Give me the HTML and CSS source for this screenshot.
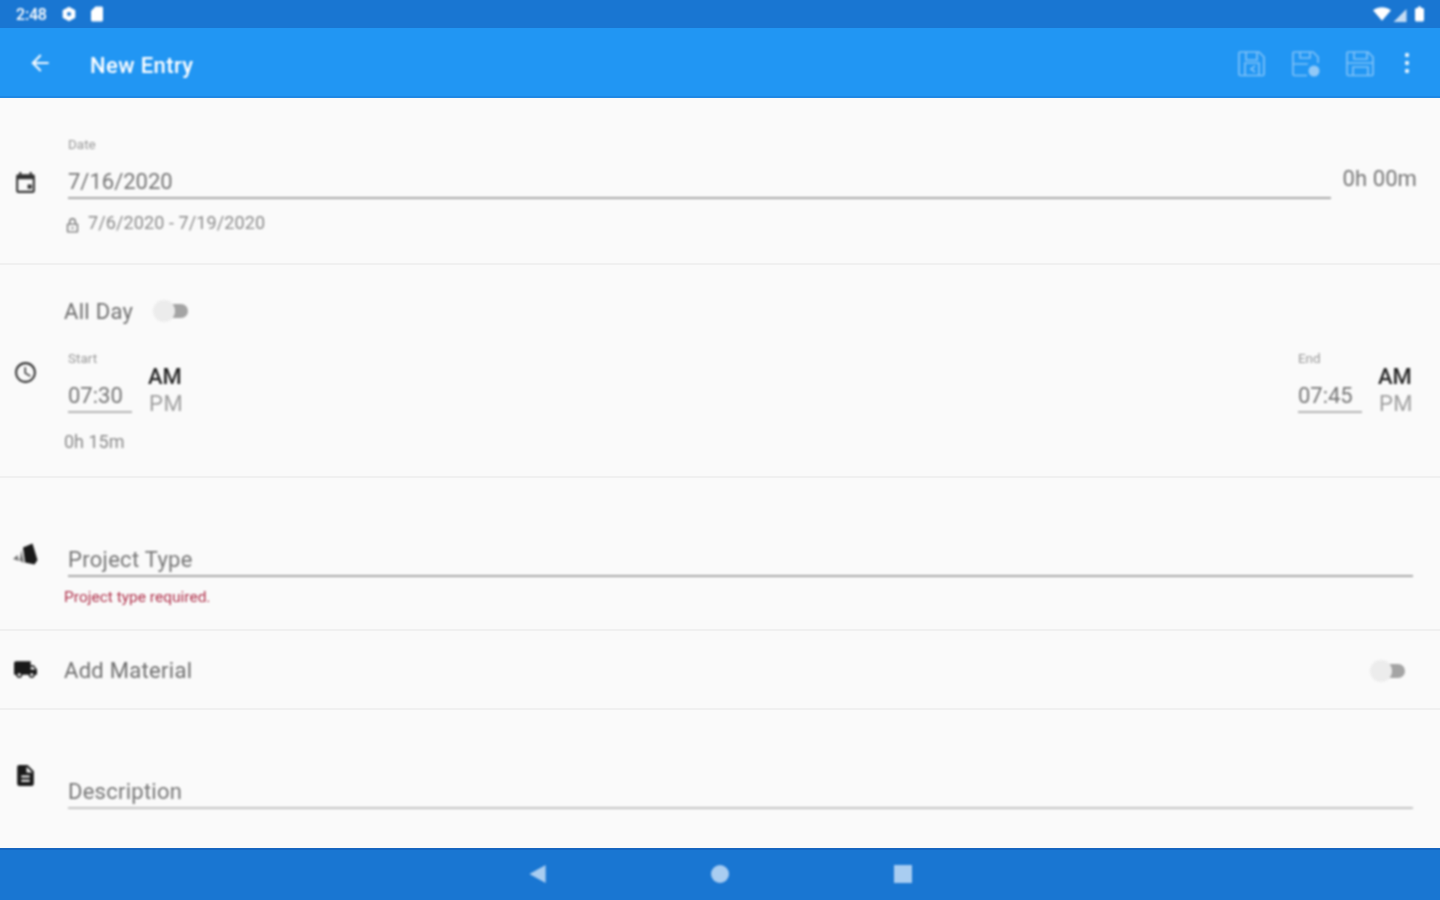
FILE: index.html
```html
<!DOCTYPE html>
<html>
  <head>
    <meta charset="utf-8" />
    <title>New Entry</title>
    <link rel="stylesheet" href="styles.css">
  </head>
  <body>
    <div class="screen">
      <div class="status-bar">
        <span class="clock-text">2:48</span>
        <svg class="status-gear" viewBox="0 0 24 24"><path d="M12 1l9.500 5.500v11L12 23l-9.500-5.500v-11zM12 9a3 3 0 1 0 0 6 3 3 0 0 0 0-6z" fill-rule="evenodd"/></svg>
        <svg class="status-sd" viewBox="0 0 24 24"><path d="M18 2h-8L4 8v12c0 1.100.9 2 2 2h12c1.100 0 2-.9 2-2V4c0-1.100-.9-2-2-2z"/></svg>
        <div class="spacer"></div>
        <svg class="status-wifi" viewBox="0 0 24 18"><path d="M12 18L0 4c7-5.300 17-5.300 24 0z"/></svg>
        <svg class="status-signal" viewBox="0 0 16 16"><path d="M16 0v16H0z" opacity=".75"/></svg>
        <svg class="status-batt" viewBox="0 0 12 20"><path d="M4 0h4v2h2c1 0 2 .8 2 2v14c0 1.200-1 2-2 2H2c-1 0-2-.8-2-2V4c0-1.200 1-2 2-2h2z"/></svg>
      </div>

      <div class="app-bar">
        <svg class="back" viewBox="0 0 24 24"><path d="M20 11H7.830l5.590-5.590L12 4l-8 8 8 8 1.410-1.410L7.830 13H20v-2z"/></svg>
        <div class="title">New Entry</div>
        <div class="spacer"></div>
        <svg class="action" viewBox="0 0 30 30"><path d="M3 4h19l5 5v17a1.500 1.500 0 0 1-1.500 1.500h-22A1.500 1.500 0 0 1 2 26V5a1 1 0 0 1 1-1zM9 4v8h11V4M8 27V15h14v12M18 18l-4 3 4 3"/></svg>
        <svg class="action" viewBox="0 0 30 30"><path d="M27 15V9l-5-5H3a1 1 0 0 0-1 1v21a1.500 1.500 0 0 0 1.500 1.500H16M9 4v6h10V4M2 16h15"/><circle cx="23" cy="23" r="5.500" fill="#a6d2f8" stroke="none"/></svg>
        <svg class="action" viewBox="0 0 30 30"><path d="M3 4h20l5 5v17a1.500 1.500 0 0 1-1.500 1.500h-23A1.500 1.500 0 0 1 2 26V5a1 1 0 0 1 1-1zM9 4v7h13V4M8 27v-8h15v8M2 15h26"/></svg>
        <svg class="more" viewBox="0 0 6 22"><circle cx="3" cy="3" r="2.200"/><circle cx="3" cy="11" r="2.200"/><circle cx="3" cy="19" r="2.200"/></svg>
      </div>

      <div class="content">
        <div class="section date-section">
          <svg class="icon cal" viewBox="0 0 24 24"><path d="M18 13h-4v4h4v-4zM16 1v2H8V1H6v2H5c-1.110 0-1.990.9-1.990 2L3 19c0 1.100.89 2 2 2h14c1.100 0 2-.9 2-2V5c0-1.100-.9-2-2-2h-1V1h-2zm3 18H5V8h14v11z"/></svg>
          <div class="date-body">
            <div class="small-label">Date</div>
            <div class="field date-field">7/16/2020</div>
            <div class="range">
              <svg class="lock" viewBox="0 0 24 24"><path d="M12 1.500a5 5 0 0 0-5 5V9H5.500A1.500 1.500 0 0 0 4 10.500v10A1.500 1.500 0 0 0 5.500 22h13a1.500 1.500 0 0 0 1.500-1.500v-10A1.500 1.500 0 0 0 18.500 9H17V6.500a5 5 0 0 0-5-5zm0 2a3 3 0 0 1 3 3V9H9V6.500a3 3 0 0 1 3-3zM6 11h12v9H6zm6 3a1.500 1.500 0 1 0 0 3 1.500 1.500 0 0 0 0-3z" fill-rule="evenodd"/></svg>
              7/6/2020 - 7/19/2020
            </div>
          </div>
          <div class="total">0h 00m</div>
        </div>

        <div class="section time-section">
          <svg class="icon" viewBox="0 0 24 24"><path d="M11.990 2C6.470 2 2 6.480 2 12s4.470 10 9.990 10C17.520 22 22 17.520 22 12S17.520 2 11.990 2zM12 20c-4.420 0-8-3.580-8-8s3.580-8 8-8 8 3.580 8 8-3.580 8-8 8zm.5-13H11v6l5.250 3.150.75-1.230-4.500-2.670z"/></svg>
          <div class="time-body">
            <div class="all-day">
              <span class="text">All Day</span>
              <div class="switch"><div class="thumb"></div></div>
            </div>
            <div class="times">
              <div class="time-group">
                <div class="time-input">
                  <div class="small-label">Start</div>
                  <div class="time-value">07:30</div>
                </div>
                <div class="ampm"><b>AM</b><span>PM</span></div>
              </div>
              <div class="time-group">
                <div class="time-input">
                  <div class="small-label">End</div>
                  <div class="time-value">07:45</div>
                </div>
                <div class="ampm"><b>AM</b><span>PM</span></div>
              </div>
            </div>
            <div class="duration">0h 15m</div>
          </div>
        </div>

        <div class="section project-section">
          <svg class="icon dark" viewBox="0 0 25 25"><path d="M10 4.500l9.500-4 5 16.500-3 4.500-9.500-2z"/><path d="M8.500 7l2.500 13-4.500-2.500zM4.500 12L6 18 0 16z" opacity=".6"/></svg>
          <div class="project-body">
            <div class="field project-field">Project Type</div>
            <div class="error">Project type required.</div>
          </div>
        </div>

        <div class="section material-section">
          <svg class="icon dark" viewBox="0 0 24 24"><path d="M20 8h-3V4H3c-1.100 0-2 .9-2 2v11h2c0 1.660 1.340 3 3 3s3-1.340 3-3h6c0 1.660 1.340 3 3 3s3-1.340 3-3h2v-5l-3-4zM6 18.500c-.83 0-1.500-.67-1.500-1.500s.67-1.500 1.500-1.500 1.500.67 1.500 1.500-.67 1.500-1.500 1.500zm13.500-9l1.960 2.500H17V9.500h2.500zm-1.500 9c-.83 0-1.500-.67-1.500-1.500s.67-1.500 1.500-1.500 1.500.67 1.500 1.500-.67 1.500-1.500 1.500z"/></svg>
          <span class="text">Add Material</span>
          <div class="spacer"></div>
          <div class="switch"><div class="thumb"></div></div>
        </div>

        <div class="section desc-section">
          <svg class="icon dark" viewBox="0 0 24 24"><path d="M14 2H6c-1.100 0-1.990.9-1.990 2L4 20c0 1.100.89 2 1.990 2H18c1.100 0 2-.9 2-2V8l-6-6zm2 16H8v-2h8v2zm0-4H8v-2h8v2zm-3-5V3.500L18.500 9H13z"/></svg>
          <div class="desc-body">
            <div class="field desc-field">Description</div>
          </div>
        </div>
      </div>

      <div class="nav-bar">
        <svg class="nav-back" viewBox="0 0 18 20"><path d="M18 0v20L0 10z"/></svg>
        <div class="nav-home"></div>
        <div class="nav-recent"></div>
      </div>
    </div>
  </body>
</html>
```

FILE: styles.css
```css
* {
  box-sizing: border-box;
}
html, body {
  margin: 0;
  padding: 0;
}
body {
  font-family: Roboto, "Noto Sans", sans-serif;
  background: #fafafa;
  color: #757575;
}
.screen {
  width: 1440px;
  height: 900px;
  display: flex;
  flex-direction: column;
  overflow: hidden;
}
/* the screenshot is soft, so soften what sits inside the bars and rows */
.status-bar > *,
.app-bar > *,
.section > *,
.nav-bar > * {
  filter: blur(0.8px);
}
.spacer {
  flex: 1;
}

.status-bar {
  height: 28px;
  background: #1976d2;
  display: flex;
  align-items: center;
  padding: 0 16px;
  color: #fff;
  fill: #fff;
}
.clock-text {
  font-size: 16px;
  font-weight: 500;
  letter-spacing: -0.2px;
  width: 45px;
}
.status-gear {
  width: 16px;
  height: 16px;
}
.status-sd {
  width: 18px;
  height: 18px;
  margin-left: 11px;
}
.status-wifi {
  width: 18px;
  height: 14px;
}
.status-signal {
  width: 14px;
  height: 13px;
  margin: 2px 0 0 2px;
}
.status-batt {
  width: 9px;
  height: 16px;
  margin-left: 8px;
}

.app-bar {
  height: 70px;
  background: #2196f3;
  border-bottom: 2px solid #1e88e5;
  display: flex;
  align-items: center;
  padding: 2px 28px 0;
  fill: #fff;
}
.back {
  width: 26px;
  height: 26px;
  margin-right: 37px;
  margin-left: -1px;
  opacity: 0.95;
}
.title {
  font-size: 22px;
  font-weight: 500;
  color: #fff;
  letter-spacing: 0.4px;
  margin-top: 5px;
}
.action {
  width: 30px;
  height: 30px;
  margin-left: 24px;
  fill: none;
  stroke: #90caf9;
  stroke-width: 1.7;
  opacity: 0.85;
}
.action:nth-last-child(2) {
  margin-right: -1px;
}
.more {
  width: 6px;
  height: 22px;
  margin: 0 2px 0 30px;
  fill: #e3f2fd;
}

.content {
  flex: 1;
  display: flex;
  flex-direction: column;
}
.section {
  display: flex;
  border-bottom: 2px solid #f0f0f0;
  padding-left: 13px;
}
.icon {
  width: 25px;
  height: 25px;
  fill: #333;
  flex-shrink: 0;
}
.dark {
  fill: #1a1a1a;
}
.text {
  font-size: 22px;
  color: #6e6e6e;
  letter-spacing: 0.3px;
}
.small-label {
  font-size: 13.5px;
  color: #9a9a9a;
  line-height: 16px;
}
.field {
  font-size: 22px;
  line-height: 30px;
  color: #757575;
  border-bottom: 2px solid #a8a8a8;
}

.date-section {
  height: 167px;
  padding-top: 38px;
  padding-right: 23px;
}
.date-section .icon {
  margin-top: 35px;
}
.date-body {
  flex: 1;
  margin-left: 30px;
}
.date-field {
  margin-top: 15px;
  height: 32px;
}
.range {
  display: flex;
  align-items: center;
  font-size: 18px;
  letter-spacing: 0.1px;
  color: #8a8a8a;
  margin-top: 12px;
}
.lock {
  width: 17px;
  height: 17px;
  fill: #777;
  margin: 6px 7px 0 -4px;
}
.total {
  font-size: 22px;
  line-height: 26px;
  letter-spacing: 0.1px;
  margin: 30px 0 0 11px;
  color: #757575;
}

.time-section {
  height: 213px;
  padding-right: 27px;
}
.time-section .icon {
  margin-top: 95px;
}
.time-body {
  flex: 1;
  margin-left: 26px;
}
.all-day {
  display: flex;
  align-items: center;
  height: 30px;
  margin-top: 31px;
}
.switch {
  width: 36px;
  height: 22px;
  display: flex;
  align-items: center;
  justify-content: flex-end;
  margin-left: 19px;
  position: relative;
}
.switch::before {
  content: "";
  width: 30px;
  height: 14px;
  border-radius: 7px;
  background: #a4a4a4;
}
.thumb {
  position: absolute;
  left: 1px;
  top: 0;
  width: 22px;
  height: 22px;
  border-radius: 50%;
  background: #ececec;
}
.times {
  display: flex;
  justify-content: space-between;
  margin-top: 24px;
}
.time-group {
  display: flex;
  align-items: flex-start;
  margin-left: 4px;
}
.time-input {
  width: 64px;
}
.time-value {
  font-size: 22px;
  line-height: 30px;
  height: 40px;
  padding-top: 8px;
  margin-top: 7px;
  color: #757575;
  border-bottom: 2px solid #b4b4b4;
}
.ampm {
  display: flex;
  flex-direction: column;
  margin: 13px 0 0 16px;
  font-size: 22px;
  line-height: 27px;
}
.ampm b {
  font-weight: 500;
  color: #262626;
}
.ampm span {
  color: #9e9e9e;
  letter-spacing: 0.5px;
  padding-left: 1px;
}
.duration {
  font-size: 18px;
  color: #8a8a8a;
  margin-top: 14px;
}

.project-section {
  height: 153px;
  padding-right: 27px;
}
.project-section .icon {
  margin-top: 65px;
}
.project-body {
  flex: 1;
  margin-left: 30px;
  padding-top: 65px;
}
.project-field {
  height: 34px;
  padding-top: 2px;
  letter-spacing: 0.3px;
}
.error {
  font-size: 15.5px;
  color: #b0324c;
  margin: 11px 0 0 -4px;
}

.material-section {
  height: 79px;
  align-items: center;
  padding-top: 3px;
  padding-right: 35px;
}
.material-section .icon {
  margin-bottom: 3px;
}
.material-section .text {
  margin: -1px 0 0 26px;
}
.material-section .switch {
  margin-left: 0;
}

.desc-section {
  flex: 1;
  border-bottom: 0;
  padding-right: 27px;
}
.desc-section .icon {
  margin-top: 53px;
}
.desc-body {
  flex: 1;
  margin-left: 30px;
  padding-top: 67px;
}
.desc-field {
  height: 32px;
  letter-spacing: 0.25px;
  border-bottom-color: #c4c4c4;
}

.nav-bar {
  height: 52px;
  background: #1976d2;
  border-top: 2px solid #1565c0;
  display: flex;
  align-items: center;
  justify-content: center;
  gap: 165px;
  padding-bottom: 2px;
}
.nav-back {
  width: 17px;
  height: 18px;
  fill: #a9cdf1;
}
.nav-home {
  width: 18px;
  height: 18px;
  border-radius: 50%;
  background: #a9cdf1;
}
.nav-recent {
  width: 18px;
  height: 18px;
  background: #a9cdf1;
}
```
